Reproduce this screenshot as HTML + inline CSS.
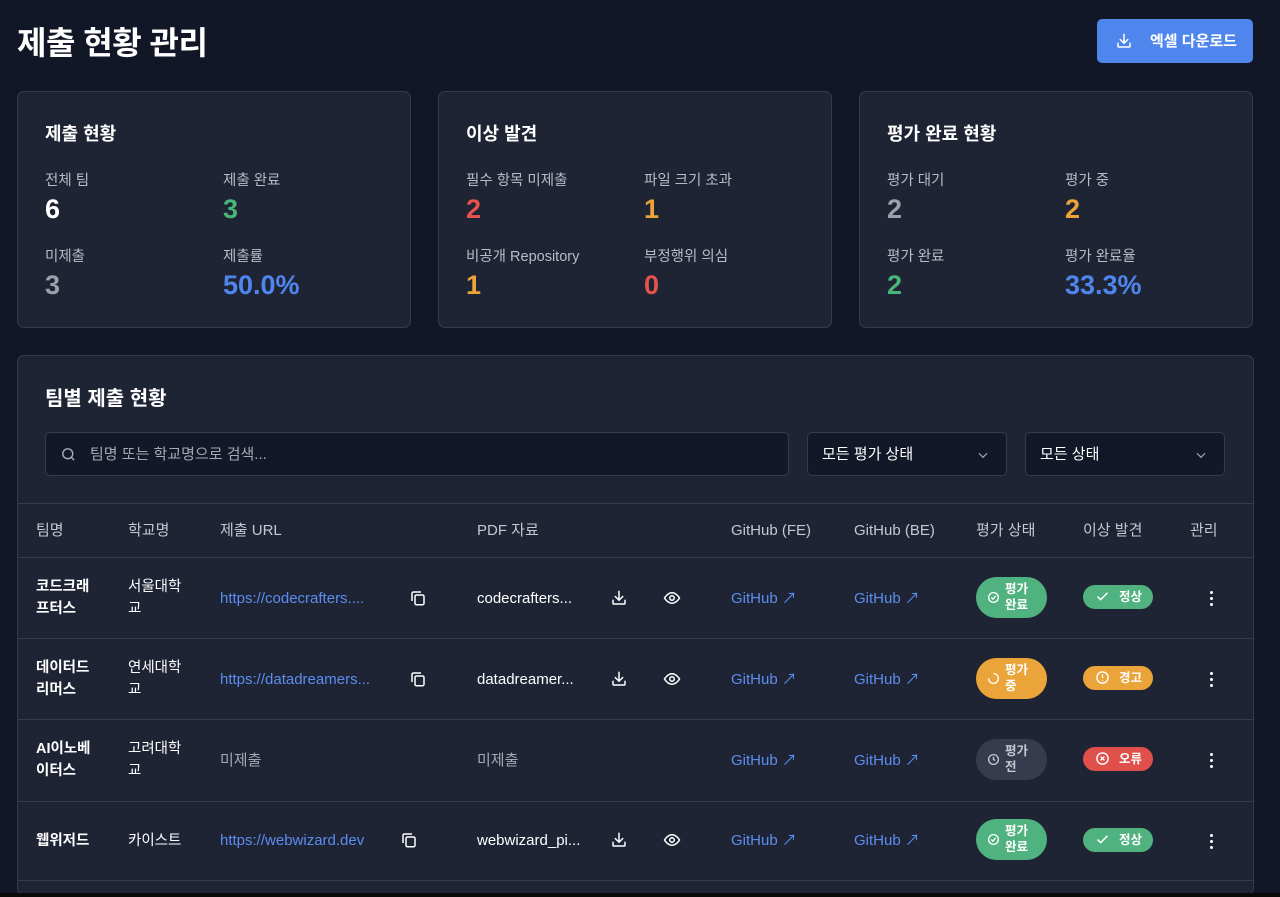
<!DOCTYPE html>
<html><head><meta charset="utf-8"><style>
*{box-sizing:border-box;margin:0;padding:0}
html,body{width:1280px;height:897px;overflow:hidden}
body{background:#111726;font-family:"Liberation Sans","Noto Sans CJK KR",sans-serif;color:#fff;position:relative}
.a{position:absolute}
h1{position:absolute;left:17px;top:21px;font-size:32px;line-height:44px;font-weight:700;letter-spacing:-0.5px}
.btn{position:absolute;left:1097px;top:19px;width:156px;height:44px;background:#4f86ee;border-radius:5px;font-size:15px;font-weight:700}
.card{position:absolute;top:91px;width:394px;height:237px;background:#1f2435;border:1px solid #353b4c;border-radius:7px}
.card h3{position:absolute;left:27px;top:30px;font-size:18px;line-height:24px;font-weight:700}
.lb{position:absolute;font-size:14.5px;line-height:20px;color:#b7bcc6}
.num{position:absolute;font-size:27px;line-height:32px;font-weight:700}
.tbl{position:absolute;left:17px;top:355px;width:1237px;height:540px;background:#1f2435;border:1px solid #353b4c;border-radius:7px}
.inp{position:absolute;top:432px;height:44px;background:#121827;border:1px solid #363c4c;border-radius:5px;font-size:15px;line-height:20px}
.line{position:absolute;left:18px;width:1235px;height:1px;background:#353b4c}
.th{position:absolute;top:521px;font-size:15px;line-height:20px;color:#c4c8d0}
.td{position:absolute;font-size:15px;line-height:20px}
.b{font-weight:700;font-size:14.5px;line-height:22px}
.link{color:#5b8def}
.gray{color:#a4a9b3}
.pill{position:absolute;left:976px;width:71px;height:41px;border-radius:21px;font-size:12.5px;font-weight:700;line-height:16px}
.pill span{position:absolute;left:29px;top:4px}
.pill svg{position:absolute;left:11px;top:14px}
.st{position:absolute;left:1083px;width:70px;height:24px;border-radius:12px;font-size:12.5px;font-weight:700;line-height:24px}
.st span{position:absolute;left:36px}
.st svg{position:absolute;left:12px;top:4px}
.k{position:absolute;left:1210px;width:4px;font-size:0}
.k i{display:block;width:3px;height:3px;background:#fff;border-radius:2px;margin-bottom:3px}
</style></head><body>
<h1>제출 현황 관리</h1>
<div class="btn"><svg class="a" style="left:18px;top:13px" width="18" height="18" viewBox="0 0 24 24" fill="none" stroke="#fff" stroke-width="2" stroke-linecap="round" stroke-linejoin="round"><path d="M4 15v4a1 1 0 0 0 1 1h14a1 1 0 0 0 1-1v-4M12 3v12M7 10l5 5 5-5"/></svg><span class="a" style="left:53px;top:13px;line-height:20px">엑셀 다운로드</span></div>

<div class="card" style="left:17px"><h3>제출 현황</h3>
<div class="lb" style="left:27px;top:79px">전체 팀</div><div class="num" style="left:27px;top:101px">6</div>
<div class="lb" style="left:205px;top:79px">제출 완료</div><div class="num" style="left:205px;top:101px;color:#48b57a">3</div>
<div class="lb" style="left:27px;top:155px">미제출</div><div class="num" style="left:27px;top:177px;color:#9ca1ab">3</div>
<div class="lb" style="left:205px;top:155px">제출률</div><div class="num" style="left:205px;top:177px;color:#4f86ee">50.0%</div></div>

<div class="card" style="left:438px"><h3>이상 발견</h3>
<div class="lb" style="left:27px;top:79px">필수 항목 미제출</div><div class="num" style="left:27px;top:101px;color:#e5534b">2</div>
<div class="lb" style="left:205px;top:79px">파일 크기 초과</div><div class="num" style="left:205px;top:101px;color:#eca338">1</div>
<div class="lb" style="left:27px;top:155px">비공개 Repository</div><div class="num" style="left:27px;top:177px;color:#eca338">1</div>
<div class="lb" style="left:205px;top:155px">부정행위 의심</div><div class="num" style="left:205px;top:177px;color:#e5534b">0</div></div>

<div class="card" style="left:859px"><h3>평가 완료 현황</h3>
<div class="lb" style="left:27px;top:79px">평가 대기</div><div class="num" style="left:27px;top:101px;color:#9ca1ab">2</div>
<div class="lb" style="left:205px;top:79px">평가 중</div><div class="num" style="left:205px;top:101px;color:#eca338">2</div>
<div class="lb" style="left:27px;top:155px">평가 완료</div><div class="num" style="left:27px;top:177px;color:#48b57a">2</div>
<div class="lb" style="left:205px;top:155px">평가 완료율</div><div class="num" style="left:205px;top:177px;color:#4f86ee">33.3%</div></div>

<div class="tbl"></div>
<div class="a" style="left:45px;top:386px;font-size:20px;line-height:26px;font-weight:700">팀별 제출 현황</div>
<div class="inp" style="left:45px;width:744px"><svg class="a" style="left:14px;top:13px" width="17" height="17" viewBox="0 0 24 24" fill="none" stroke="#aab" stroke-width="2"><circle cx="11" cy="11" r="7"/><path d="M20 20l-4-4"/></svg><span class="a gray" style="left:44px;top:12px">팀명 또는 학교명으로 검색...</span></div>
<div class="inp" style="left:807px;width:200px"><span class="a" style="left:14px;top:12px">모든 평가 상태</span><svg class="a" style="left:168px;top:15px" width="14" height="14" viewBox="0 0 24 24" fill="none" stroke="#aab" stroke-width="2"><path d="M5 9l7 7 7-7"/></svg></div>
<div class="inp" style="left:1025px;width:200px"><span class="a" style="left:14px;top:12px">모든 상태</span><svg class="a" style="left:168px;top:15px" width="14" height="14" viewBox="0 0 24 24" fill="none" stroke="#aab" stroke-width="2"><path d="M5 9l7 7 7-7"/></svg></div>

<div class="line" style="top:503px"></div>
<div class="th" style="left:36px">팀명</div><div class="th" style="left:128px">학교명</div><div class="th" style="left:220px">제출 URL</div><div class="th" style="left:477px">PDF 자료</div><div class="th" style="left:731px">GitHub (FE)</div><div class="th" style="left:854px">GitHub (BE)</div><div class="th" style="left:976px">평가 상태</div><div class="th" style="left:1083px">이상 발견</div><div class="th" style="left:1190px">관리</div>
<div class="line" style="top:557px"></div><div class="line" style="top:638px"></div><div class="line" style="top:719px"></div><div class="line" style="top:801px"></div><div class="line" style="top:880px"></div>

<div class="td b" style="left:36px;top:576px">코드크래<br>프터스</div><div class="td b" style="left:128px;top:576px;font-weight:400">서울대학<br>교</div>
<div class="td link" style="left:220px;top:589px">https://codecrafters....</div>
<div class="td" style="left:477px;top:589px">codecrafters...</div>

<div class="td b" style="left:36px;top:657px">데이터드<br>리머스</div><div class="td b" style="left:128px;top:657px;font-weight:400">연세대학<br>교</div>
<div class="td link" style="left:220px;top:670px">https://datadreamers...</div>
<div class="td" style="left:477px;top:670px">datadreamer...</div>

<div class="td b" style="left:36px;top:738px">AI이노베<br>이터스</div><div class="td b" style="left:128px;top:738px;font-weight:400">고려대학<br>교</div>
<div class="td gray" style="left:220px;top:751px">미제출</div>
<div class="td gray" style="left:477px;top:751px">미제출</div>

<div class="td b" style="left:36px;top:830px">웹위저드</div><div class="td b" style="left:128px;top:830px;font-weight:400">카이스트</div>
<div class="td link" style="left:220px;top:831px">https://webwizard.dev</div>
<div class="td" style="left:477px;top:831px">webwizard_pi...</div>

<svg class="a" style="left:409px;top:589px" width="18" height="18" viewBox="0 0 24 24" fill="none" stroke="#fff" stroke-width="2"><rect x="8" y="8" width="12" height="13" rx="2"/><path d="M16 4H6a2 2 0 0 0-2 2v10"/></svg>
<svg class="a" style="left:409px;top:670px" width="18" height="18" viewBox="0 0 24 24" fill="none" stroke="#fff" stroke-width="2"><rect x="8" y="8" width="12" height="13" rx="2"/><path d="M16 4H6a2 2 0 0 0-2 2v10"/></svg>
<svg class="a" style="left:400px;top:831px" width="18" height="18" viewBox="0 0 24 24" fill="none" stroke="#fff" stroke-width="2"><rect x="8" y="8" width="12" height="13" rx="2"/><path d="M16 4H6a2 2 0 0 0-2 2v10"/></svg>
<svg class="a" style="left:610px;top:589px" width="18" height="18" viewBox="0 0 24 24" fill="none" stroke="#fff" stroke-width="2" stroke-linecap="round"><path d="M4 15v4a1 1 0 0 0 1 1h14a1 1 0 0 0 1-1v-4M12 3v12M7 10l5 5 5-5"/></svg>
<svg class="a" style="left:610px;top:670px" width="18" height="18" viewBox="0 0 24 24" fill="none" stroke="#fff" stroke-width="2" stroke-linecap="round"><path d="M4 15v4a1 1 0 0 0 1 1h14a1 1 0 0 0 1-1v-4M12 3v12M7 10l5 5 5-5"/></svg>
<svg class="a" style="left:610px;top:831px" width="18" height="18" viewBox="0 0 24 24" fill="none" stroke="#fff" stroke-width="2" stroke-linecap="round"><path d="M4 15v4a1 1 0 0 0 1 1h14a1 1 0 0 0 1-1v-4M12 3v12M7 10l5 5 5-5"/></svg>
<svg class="a" style="left:663px;top:589px" width="18" height="18" viewBox="0 0 24 24" fill="none" stroke="#fff" stroke-width="2"><path d="M2 12s4-7 10-7 10 7 10 7-4 7-10 7S2 12 2 12z"/><circle cx="12" cy="12" r="3"/></svg>
<svg class="a" style="left:663px;top:670px" width="18" height="18" viewBox="0 0 24 24" fill="none" stroke="#fff" stroke-width="2"><path d="M2 12s4-7 10-7 10 7 10 7-4 7-10 7S2 12 2 12z"/><circle cx="12" cy="12" r="3"/></svg>
<svg class="a" style="left:663px;top:831px" width="18" height="18" viewBox="0 0 24 24" fill="none" stroke="#fff" stroke-width="2"><path d="M2 12s4-7 10-7 10 7 10 7-4 7-10 7S2 12 2 12z"/><circle cx="12" cy="12" r="3"/></svg>

<div class="td link" style="left:731px;top:589px">GitHub ↗</div><div class="td link" style="left:854px;top:589px">GitHub ↗</div>
<div class="td link" style="left:731px;top:670px">GitHub ↗</div><div class="td link" style="left:854px;top:670px">GitHub ↗</div>
<div class="td link" style="left:731px;top:751px">GitHub ↗</div><div class="td link" style="left:854px;top:751px">GitHub ↗</div>
<div class="td link" style="left:731px;top:831px">GitHub ↗</div><div class="td link" style="left:854px;top:831px">GitHub ↗</div>

<div class="pill" style="top:577px;background:#4fb27f"><svg width="13" height="13" viewBox="0 0 24 24" fill="none" stroke="#fff" stroke-width="2.5"><circle cx="12" cy="12" r="9"/><path d="M8 12l3 3 5-6"/></svg><span>평가<br>완료</span></div>
<div class="pill" style="top:658px;background:#eaa43a"><svg width="13" height="13" viewBox="0 0 24 24" fill="none" stroke="#fff" stroke-width="2.5"><path d="M12 3a9 9 0 1 1-9 9"/></svg><span>평가<br>중</span></div>
<div class="pill" style="top:739px;background:#363c4d;color:#c4c8d0"><svg width="13" height="13" viewBox="0 0 24 24" fill="none" stroke="#c4c8d0" stroke-width="2.5"><circle cx="12" cy="12" r="9"/><path d="M12 7v5l3 2"/></svg><span>평가<br>전</span></div>
<div class="pill" style="top:819px;background:#4fb27f"><svg width="13" height="13" viewBox="0 0 24 24" fill="none" stroke="#fff" stroke-width="2.5"><circle cx="12" cy="12" r="9"/><path d="M8 12l3 3 5-6"/></svg><span>평가<br>완료</span></div>

<div class="st" style="top:585px;background:#4fb27f"><svg width="15" height="15" viewBox="0 0 24 24" fill="none" stroke="#fff" stroke-width="2.5"><path d="M4 12l5 5L20 6"/></svg><span>정상</span></div>
<div class="st" style="top:666px;background:#eaa43a"><svg width="15" height="15" viewBox="0 0 24 24" fill="none" stroke="#fff" stroke-width="2.2"><circle cx="12" cy="12" r="9"/><path d="M12 7v6M12 16v1"/></svg><span>경고</span></div>
<div class="st" style="top:747px;background:#e0504a"><svg width="15" height="15" viewBox="0 0 24 24" fill="none" stroke="#fff" stroke-width="2.2"><circle cx="12" cy="12" r="9"/><path d="M9 9l6 6M15 9l-6 6"/></svg><span>오류</span></div>
<div class="st" style="top:828px;background:#4fb27f"><svg width="15" height="15" viewBox="0 0 24 24" fill="none" stroke="#fff" stroke-width="2.5"><path d="M4 12l5 5L20 6"/></svg><span>정상</span></div>

<div class="k" style="top:591px"><i></i><i></i><i></i></div>
<div class="k" style="top:672px"><i></i><i></i><i></i></div>
<div class="k" style="top:753px"><i></i><i></i><i></i></div>
<div class="k" style="top:834px"><i></i><i></i><i></i></div>

<div class="a" style="left:0;top:893px;width:1280px;height:4px;background:#0a0a0a"></div>
</body></html>
